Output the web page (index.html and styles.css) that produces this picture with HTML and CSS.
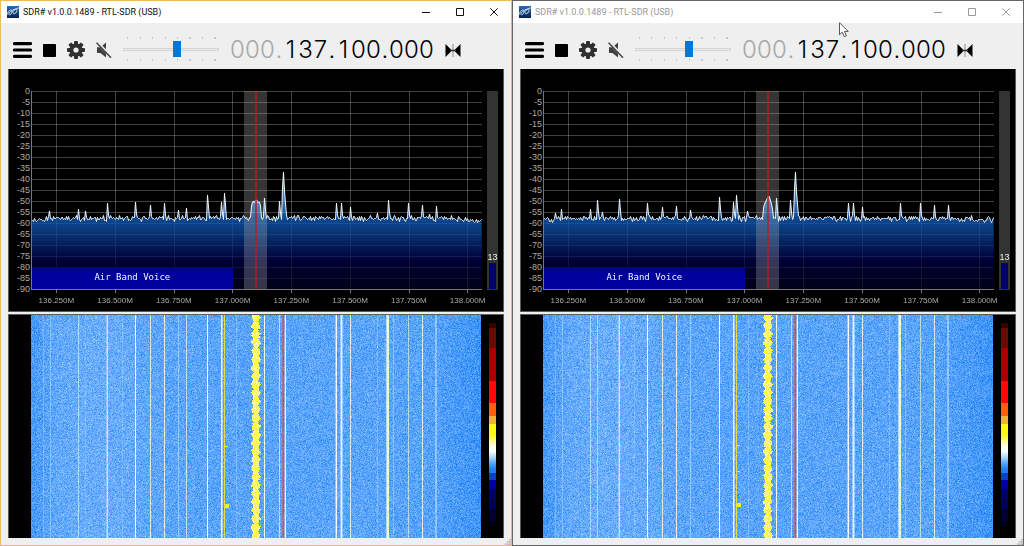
FILE: index.html
```html
<!DOCTYPE html>
<html lang="en">
<head>
<meta charset="utf-8">
<title>SDR# v1.0.0.1489 - RTL-SDR (USB)</title>
<link rel="stylesheet" href="styles.css">
</head>
<body>
<svg class="defs" aria-hidden="true">
  <defs>
    <linearGradient id="logo-bg" x1="0" y1="0" x2="0" y2="1"><stop offset="0" stop-color="#2a6ab4"/><stop offset="1" stop-color="#04224f"/></linearGradient>
    <symbol id="i-logo" viewBox="0 0 12 12"><rect width="12" height="12" fill="url(#logo-bg)"/><path d="M0 8.500C2 3.500 4.500 3 5 5S3 9.500 2 8.500 4 4.500 7 3.500 10.500 4 9.500 6 6 8.500 6 6.500 9 2 12 2" fill="none" stroke="#d5e6fa" stroke-width="1"/></symbol>
    <symbol id="i-min" viewBox="0 0 8 8"><path d="M0 4.500h8" stroke="currentColor"/></symbol>
    <symbol id="i-max" viewBox="0 0 8 8"><path d="M.5.5h7v7h-7z" fill="none" stroke="currentColor"/></symbol>
    <symbol id="i-close" viewBox="0 0 8 8"><path d="M.3.3l7.400 7.400M7.700.3L.3 7.700" stroke="currentColor"/></symbol>
    <symbol id="i-menu" viewBox="0 0 19 16"><path d="M1.500 1.600h16M1.500 8h16M1.500 14.400h16" stroke="#000" stroke-width="3.200" stroke-linecap="round"/></symbol>
    <symbol id="i-stop" viewBox="0 0 13 13"><rect width="13" height="13" rx=".8"/></symbol>
    <symbol id="i-gear" viewBox="-9 -9 18 18"><g fill="#303030"><g id="teeth"><rect x="-2" y="-9" width="4" height="18" rx="1"/><rect x="-9" y="-2" width="18" height="4" rx="1"/></g><use href="#teeth" transform="rotate(45)"/><circle r="6.600"/></g><circle r="2.600" fill="#efefef"/></symbol>
    <symbol id="i-mute" viewBox="0 0 16 16"><path d="M1 5.200h3.500L10 .5v15L4.500 11H1z" fill="#404040"/><path d="M.8 0L16 15.600" stroke="#efefef" stroke-width="3"/><path d="M.5.8L15 15.700" stroke="#404040" stroke-width="1.500"/></symbol>
    <symbol id="i-center" viewBox="0 0 16 13"><path d="M.5 0L7 6.500.5 13zM15.500 0L9 6.500l6.500 6.500z"/><path d="M8 0v13" stroke="#888"/><path d="M5 6.500h6" stroke="#333" stroke-width="1.500"/></symbol>
    <symbol id="i-grip" viewBox="0 0 6 6"><path d="M4 0h2v1.500H4zM2 2h1.700v1.700H2zM4 2h2v1.700H4zM0 4.300h1.500V6H0zM2 4.300h1.700V6H2zM4 4.300h2V6H4z" fill="#bdbdbd"/></symbol>
  </defs>
</svg>
<main class="desktop">
  <section class="window active" data-seed="11">
    <header class="titlebar">
      <svg class="logo"><use href="#i-logo"/></svg>
      <h1 class="title">SDR# v1.0.0.1489 - RTL-SDR (USB)</h1>
      <button class="caption" aria-label="Minimize"><svg><use href="#i-min"/></svg></button>
      <button class="caption" aria-label="Maximize"><svg><use href="#i-max"/></svg></button>
      <button class="caption" aria-label="Close"><svg><use href="#i-close"/></svg></button>
    </header>
    <div class="toolbar">
      <button class="tool menu" aria-label="Menu"><svg><use href="#i-menu"/></svg></button>
      <button class="tool stop" aria-label="Stop"><svg><use href="#i-stop"/></svg></button>
      <button class="tool gear" aria-label="Settings"><svg><use href="#i-gear"/></svg></button>
      <button class="tool mute" aria-label="Mute"><svg><use href="#i-mute"/></svg></button>
      <input class="volume" type="range" min="0" max="100" value="57" aria-label="Volume">
      <div class="frequency"><span class="dim"><b>0</b><b>0</b><b>0</b><i>.</i></span><b>1</b><b>3</b><b>7</b><i>.</i><b>1</b><b>0</b><b>0</b><i>.</i><b>0</b><b>0</b><b>0</b></div>
      <button class="tool center" aria-label="Center tuning"><svg><use href="#i-center"/></svg></button>
    </div>
    <div class="spectrum">
      <ol class="levels"><li>0</li><li>-5</li><li>-10</li><li>-15</li><li>-20</li><li>-25</li><li>-30</li><li>-35</li><li>-40</li><li>-45</li><li>-50</li><li>-55</li><li>-60</li><li>-65</li><li>-70</li><li>-75</li><li>-80</li><li>-85</li><li>-90</li></ol>
      <div class="plot"><canvas class="trace" width="451" height="202"></canvas><div class="band">Air Band Voice</div></div>
      <div class="meter"><span>13</span><div class="meter-fill"></div></div>
      <ol class="freqs"><li>136.250M</li><li>136.500M</li><li>136.750M</li><li>137.000M</li><li>137.250M</li><li>137.500M</li><li>137.750M</li><li>138.000M</li></ol>
    </div>
    <div class="waterfall"><canvas class="history" width="450" height="223"></canvas><div class="scale"></div></div>
    <footer class="foot"><svg class="grip"><use href="#i-grip"/></svg></footer>
  </section>
  <section class="window" data-seed="29">
    <header class="titlebar">
      <svg class="logo"><use href="#i-logo"/></svg>
      <h1 class="title">SDR# v1.0.0.1489 - RTL-SDR (USB)</h1>
      <button class="caption" aria-label="Minimize"><svg><use href="#i-min"/></svg></button>
      <button class="caption" aria-label="Maximize"><svg><use href="#i-max"/></svg></button>
      <button class="caption" aria-label="Close"><svg><use href="#i-close"/></svg></button>
    </header>
    <div class="toolbar">
      <button class="tool menu" aria-label="Menu"><svg><use href="#i-menu"/></svg></button>
      <button class="tool stop" aria-label="Stop"><svg><use href="#i-stop"/></svg></button>
      <button class="tool gear" aria-label="Settings"><svg><use href="#i-gear"/></svg></button>
      <button class="tool mute" aria-label="Mute"><svg><use href="#i-mute"/></svg></button>
      <input class="volume" type="range" min="0" max="100" value="57" aria-label="Volume">
      <div class="frequency"><span class="dim"><b>0</b><b>0</b><b>0</b><i>.</i></span><b>1</b><b>3</b><b>7</b><i>.</i><b>1</b><b>0</b><b>0</b><i>.</i><b>0</b><b>0</b><b>0</b></div>
      <button class="tool center" aria-label="Center tuning"><svg><use href="#i-center"/></svg></button>
    </div>
    <div class="spectrum">
      <ol class="levels"><li>0</li><li>-5</li><li>-10</li><li>-15</li><li>-20</li><li>-25</li><li>-30</li><li>-35</li><li>-40</li><li>-45</li><li>-50</li><li>-55</li><li>-60</li><li>-65</li><li>-70</li><li>-75</li><li>-80</li><li>-85</li><li>-90</li></ol>
      <div class="plot"><canvas class="trace" width="451" height="202"></canvas><div class="band">Air Band Voice</div></div>
      <div class="meter"><span>13</span><div class="meter-fill"></div></div>
      <ol class="freqs"><li>136.250M</li><li>136.500M</li><li>136.750M</li><li>137.000M</li><li>137.250M</li><li>137.500M</li><li>137.750M</li><li>138.000M</li></ol>
    </div>
    <div class="waterfall"><canvas class="history" width="450" height="223"></canvas><div class="scale"></div></div>
    <footer class="foot"><svg class="grip"><use href="#i-grip"/></svg></footer>
    <svg class="cursor" viewBox="0 0 10 16"><path d="M.5.700v12l2.800-2.500 1.900 4.500 2.200-.9-1.900-4.400h3.700z" fill="#fff" stroke="#444" stroke-width=".9"/></svg>
  </section>
</main>
<script src="radio.js"></script>
</body>
</html>
```
FILE: styles.css
```css
* { box-sizing: border-box; }
body { margin: 0; background: #1c1a16; font-family: "Liberation Sans", Arial, sans-serif; }
ol { list-style: none; margin: 0; padding: 0; }
button { border: 0; background: none; padding: 0; color: inherit; }
button svg { display: block; width: 100%; height: 100%; }
canvas { display: block; }
.defs { position: absolute; width: 0; height: 0; }

.desktop { display: grid; grid-template-columns: 1fr 1fr; min-height: 100vh; padding-bottom: 1px; }
.window { position: relative; display: flex; flex-direction: column; min-width: 0; border: 1px solid #666; background: #efefef; color: #999; }
.window.active { border-color: #efb95c; color: #111; }

.titlebar { display: flex; align-items: center; height: 22px; padding: 0 13px 0 6px; background: #fff; }
.logo { width: 12px; height: 12px; }
.title { flex: 1; margin: 0 0 0 4px; font: 400 9px/12px Roboto, "Open Sans", sans-serif; white-space: nowrap; }
.caption { width: 8px; height: 8px; margin-left: 26px; }

.toolbar { display: flex; align-items: center; gap: 11px; height: 46px; padding: 8px 12px 0; }
.tool { flex: none; }
.menu { width: 19px; height: 16px; }
.stop { width: 13px; height: 13px; }
.gear { width: 18px; height: 18px; }
.mute { width: 16px; height: 16px; }
.center { width: 16px; height: 13px; }
.volume {
  appearance: none; flex: none; width: 96px; height: 24px; margin: 0 0 2px;
  background:
    repeating-linear-gradient(90deg, #c8c8c8 0 1px, transparent 1px 12.5%) 4px 0 / 100px 2px no-repeat,
    repeating-linear-gradient(90deg, #c8c8c8 0 1px, transparent 1px 12.5%) 4px 100% / 100px 2px no-repeat;
}
.volume::-webkit-slider-runnable-track { height: 3px; border: 1px solid #d4d4d4; background: #e7eaea; }
.volume::-webkit-slider-thumb { appearance: none; width: 8px; height: 16px; margin-top: -8px; background: #0078d7; }
.frequency { display: flex; color: #000; font: 300 24px/24px Inter, "Open Sans", sans-serif; }
.frequency .dim { display: flex; color: #a8a8a8; }
.frequency b, .frequency i { width: 15px; font-weight: 300; font-style: normal; text-align: center; }
.frequency i { width: 8px; }

.spectrum {
  flex: 1 1 243px; margin: 0 7px 2px; padding: 17px 5px 5px 0;
  display: grid; grid-template: minmax(0, 1fr) 11px / 22px minmax(0, 1fr) 11px;
  background: #000; border: solid #5c5c5c; border-width: 0 1px 1px; color: #a9a9a9;
  font-size: 8px; line-height: 11px;
}
.levels { display: flex; flex-direction: column; justify-content: space-between; padding-right: 1px; font-size: 9px; text-align: right; }
.plot { display: grid; grid-template: minmax(0, 1fr) / minmax(0, 1fr); margin: 5px 5px 2px 0; }
.trace { grid-area: 1 / 1; width: 100%; height: 100%; }
.band {
  grid-area: 1 / 1; align-self: end; width: 44.5%; margin: 0 0 4px 1px; padding-bottom: 2px;
  background: #00009c; color: #f4f4ff; text-align: center;
  font: 9px/20px "DejaVu Sans Mono", monospace;
}
.meter { display: flex; flex-direction: column; justify-content: flex-end; margin: 5px 0; padding: 0 2px 1px; background: #333; color: #eee; font-size: 9px; text-align: center; }
.meter span { align-self: center; }
.meter-fill { height: 13%; background: #00006c; }
.freqs { grid-column: 1 / -1; display: grid; grid-template-columns: repeat(8, 1fr); padding-left: 18px; margin-right: 1px; text-align: center; }

.waterfall { flex: 1 1 223px; display: grid; grid-template: minmax(0, 1fr) / minmax(0, 1fr) 7px; column-gap: 8px; margin: 0 7px; padding: 0 7px 0 22px; background: #000; border: solid #5c5c5c; border-width: 1px 1px 0; }
.history { width: 100%; height: 100%; }
.scale {
  margin: 8px 0 12px;
  background: linear-gradient(#330500 0 2.5%, #660c00 2.5% 12.4%, #a80000 12.4% 28.5%, #fa0a00 28.5% 39.6%, #ff6010 39.6% 46%, #f0b040 46% 50%, #fff81a 50% 55%, #fff860 57%, #fffff0 61%, #fff 63%, #b0d8ff 66%, #58a8ff 69%, #2080e8 72% 73.8%, #1040c0 73.8% 77.300%, #0000a0 77.300% 81.700%, #00006c 81.700% 86%, #000054 86% 91.500%, #000030 91.500% 98%, #000018 98%);
}
.foot { display: flex; justify-content: flex-end; align-items: flex-end; height: 7px; }
.grip { width: 6px; height: 6px; }
.cursor { position: absolute; left: 64%; top: 21px; width: 10px; height: 16px; }
```
FILE: radio.js
```js
// Peaks are [x, y] on a 451 x 198 chart; lines are [x, width, colour, opacity] on the waterfall.
const common = {
  lines: [[12,1,'#cfe8ff',.3],[19,1,'#cfe8ff',.4],[47,1,'#fff',.5],[76,1,'#f0f4b8',.8],[75,1,'#e0f0ff',.4],[91,1,'#cfe8ff',.25],
    [104,1,'#ffffe8',.95],[119,1,'#f4f8d0',.85],[133,1,'#f8f8d0',.9],[147,1,'#dff0ff',.45],[176,1,'#ffffe0',1],
    [190,1,'#f4fbff',.9],[191,1,'#e0f0ff',.6],[193,1,'#e8e040',1],[205,1,'#cfe8ff',.3],[233,1,'#ffffe0',1],[248,1,'#f0f0d8',.7],
    [251,1,'#a86878',.8],[252,1,'#f05a18',1],[253,1,'#e0b0a0',.6],[254,1,'#fff8d8',.95],[305,1,'#fff',1],[304,1,'#e0f0ff',.5],
    [309,3,'#e8f4ff',.5],[310,1,'#ffff90',.95],[319,1,'#f4f8f0',.85],[346,1,'#cfe8ff',.3],[356,2,'#ffffc8',.95],
    [355,1,'#e0f0ff',.7],[362,1,'#cfe8ff',.4],[377,1,'#e8f0d0',.7],[391,1,'#f4f8e8',.85],[404,2,'#cfe8ff',.5]]
};
const scenes = {
  11: {
    peaks: [[18,120],[47,118],[54,120],[76,112],[104,111],[119,114],[133,112],[147,119],[155,117],[176,104],[190,111],[193,102],
      [220,115],[221,111],[222,110],[223,112],[224,109],[225,109],[226,110],[227,112],[228,111],[229,115],[233,107],[248,110],
      [251,97],[252,81],[253,100],[254,112],[305,112],[310,112],[319,116],[346,122],[357,109],[377,112],[391,114],[398,123],[405,115]],
    extra: [[155,1,'#f0f4e8',.7],[54,1,'#cfe8ff',.2]],
    blobs: [[194,189,4,4],[193,131,4,1]]
  },
  29: {
    peaks: [[12,122],[18,118],[47,118],[54,109],[59,121],[76,108],[104,112],[119,116],[133,115],[147,119],[176,106],[190,111],[193,104],
      [204,120],[220,117],[221,113],[222,111],[223,109],[224,107],[225,105],[226,106],[227,110],[228,113],[229,118],[233,107],[247,109],
      [251,98],[252,81],[253,101],[254,113],[305,112],[310,112],[319,116],[357,112],[377,112],[391,114],[405,114]],
    extra: [[54,1,'#e0e890',.65]],
    blobs: [[194,188,4,4],[194,130,3,1],[194,156,3,1]]
  }
};

function random(seed) {
  return () => {
    seed = (seed + 0x6D2B79F5) | 0;
    let t = Math.imul(seed ^ (seed >>> 15), 1 | seed);
    t = (t + Math.imul(t ^ (t >>> 7), 61 | t)) ^ t;
    return ((t ^ (t >>> 14)) >>> 0) / 4294967296;
  };
}

function fit(canvas) {
  const box = canvas.getBoundingClientRect();
  canvas.width = Math.round(box.width);
  canvas.height = Math.round(box.height);
  return canvas.getContext('2d');
}

function drawSpectrum(canvas, scene, rnd) {
  const c = fit(canvas), w = canvas.width, h = canvas.height - 4, k = w / 451, v = h / 198;
  const y = [];
  for (let i = 0; i < w; i++) {
    const u = i / k;
    y.push(Math.round((127 + (u < 15 || u > 430 ? 1.5 : 0) + (rnd() + rnd() - 1) * 3.4) * v) + .5);
  }
  for (const [px, py] of scene.peaks) {
    const i = Math.round(px * k);
    y[i] = py * v;
    if (py < 116) y[i + 1] = Math.min(y[i + 1], (py + 12) * v);
  }
  c.fillStyle = '#000';
  c.fillRect(0, 0, w, h + 4);
  const shape = new Path2D();
  shape.moveTo(0, h);
  y.forEach((p, i) => shape.lineTo(i + .5, p));
  shape.lineTo(w, h);
  const g = c.createLinearGradient(0, 80 * v, 0, h);
  [[0,'#5c9fe0'],[.25,'#3a78c0'],[.39,'#0c4a94'],[.5,'#0a3a7c'],[.6,'#04235f'],[.7,'#000d48'],[.76,'#000034'],[1,'#000018']].forEach(s => g.addColorStop(...s));
  c.fillStyle = g;
  c.fill(shape);
  c.fillStyle = 'rgba(180,180,180,.36)';
  for (let i = 0; i < 18; i++) {
    c.globalAlpha = i > 11 ? .3 : 1;
    c.fillRect(0, Math.round(i * h / 18), w, 1);
  }
  for (let i = 0; i < 8; i++) {
    const x = Math.round((25 + i * 58.75) * k);
    c.globalAlpha = 1;
    c.fillRect(x, 0, 1, Math.round(127 * v));
    c.globalAlpha = .3;
    c.fillRect(x, Math.round(127 * v), 1, h);
  }
  c.globalAlpha = 1;
  c.fillStyle = 'rgba(190,190,190,.28)';
  c.fillRect(Math.round(213 * k), 0, 23 * k, h);
  c.strokeStyle = '#f2f6fa';
  c.lineWidth = 1;
  c.beginPath();
  y.forEach((p, i) => c.lineTo(i + .5, p));
  c.stroke();
  c.fillStyle = 'rgba(190,25,30,.7)';
  c.fillRect(Math.round(224 * k), 0, 2, h);
  c.fillStyle = '#777';
  c.fillRect(0, h, w, 1);
  c.fillRect(0, 0, 1, h);
  for (let i = 0; i < 8; i++) c.fillRect(Math.round((25 + i * 58.75) * k), h, 1, 4);
}

function drawWaterfall(canvas, scene, rnd) {
  const c = fit(canvas), w = canvas.width, h = canvas.height, k = w / 450;
  const img = c.createImageData(w, h);
  for (let y = 0; y < h; y++) for (let x = 0; x < w; x++) {
    const u = x / k;
    let t = .46 + .1 * Math.exp(-(((u - 65) / 55) ** 2)) - (u < 25 ? (25 - u) * .006 : 0) - (u > 390 ? (u - 390) * .003 : 0);
    t += (rnd() + rnd() + rnd() - 1.5) * .3;
    t = Math.max(0, Math.min(1, t));
    const i = (y * w + x) * 4;
    img.data[i] = 20 + t * 150;
    img.data[i + 1] = 124 + t * 86;
    img.data[i + 2] = 242 + t * 20;
    img.data[i + 3] = 255;
  }
  c.putImageData(img, 0, 0);
  for (const [x, lw, colour, a] of [...common.lines, ...scene.extra]) {
    c.fillStyle = colour;
    for (let y = 0; y < h; y++) {
      c.globalAlpha = Math.max(.05, Math.min(1, a * (.8 + rnd() * .35)));
      c.fillRect(Math.round(x * k), y, lw, 1);
    }
  }
  c.globalAlpha = 1;
  for (let y = 0; y < h; y++) {
    const wave = Math.sin(y * .75) * .9;
    const left = 222.4 - wave - rnd() * 1.2, right = 227.2 + wave + rnd() * 1.2;
    c.fillStyle = '#fffbd0';
    c.fillRect(Math.round((left - .5) * k), y, Math.round(right - left + 1), 1);
    for (let x = Math.round(left); x < right; x++) {
      c.fillStyle = rnd() < .65 ? '#fff440' : '#fffaa0';
      c.fillRect(Math.round(x * k), y, 1, 1);
    }
    if (rnd() < .4) { c.fillStyle = '#d82830'; c.globalAlpha = .6; c.fillRect(Math.round(252 * k), y, 1, 1); c.globalAlpha = 1; }
  }
  c.fillStyle = '#f4f020';
  for (const [x, y, bw, bh] of scene.blobs) c.fillRect(x * k, y * h / 223, bw, bh);
}

function draw() {
  document.querySelectorAll('.window').forEach(win => {
    const seed = Number(win.dataset.seed);
    drawSpectrum(win.querySelector('.trace'), scenes[seed], random(seed));
    drawWaterfall(win.querySelector('.history'), scenes[seed], random(seed + 1));
  });
}
draw();
addEventListener('resize', draw);
```
